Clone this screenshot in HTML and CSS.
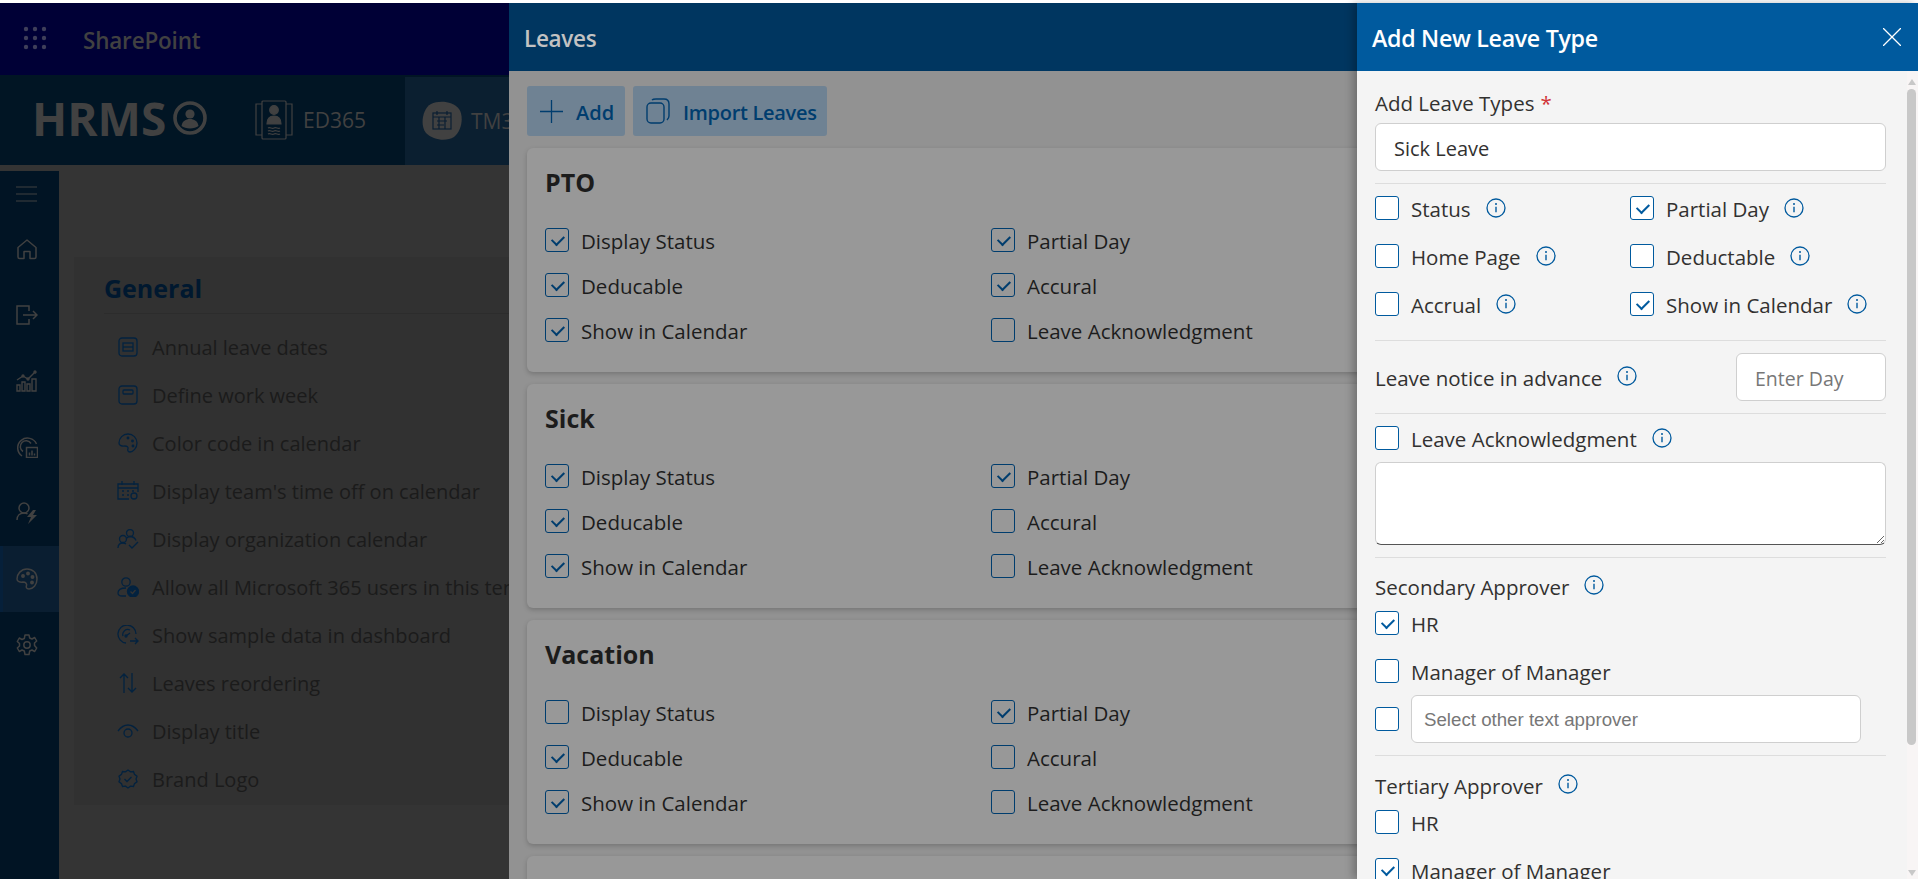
FILE: index.html
```html
<!DOCTYPE html>
<html>
<head>
    <title>HRMS - Leaves</title>
    <link rel="stylesheet" href="styles.css">
</head>
<body>
    <svg class="defs" width="0" height="0">
        <symbol id="info" viewBox="0 0 20 20">
            <circle cx="10" cy="10" r="9" fill="none" stroke="currentColor" stroke-width="1.3"/>
            <path d="M10 8.7v5.6" fill="none" stroke="currentColor" stroke-width="1.4"/>
            <circle cx="10" cy="6" r="1" fill="currentColor"/>
        </symbol>
    </svg>

    <header class="suite-bar">
        <svg class="waffle" width="24" height="24" viewBox="0 0 24 24" fill="#3f3f5a">
            <circle cx="3" cy="3" r="2.2"/><circle cx="12" cy="3" r="2.2"/><circle cx="21" cy="3" r="2.2"/>
            <circle cx="3" cy="12" r="2.2"/><circle cx="12" cy="12" r="2.2"/><circle cx="21" cy="12" r="2.2"/>
            <circle cx="3" cy="21" r="2.2"/><circle cx="12" cy="21" r="2.2"/><circle cx="21" cy="21" r="2.2"/>
        </svg>
        <span class="suite-name">SharePoint</span>
    </header>

    <nav class="app-bar">
        <div class="brand">
            <span>HRMS</span>
            <svg width="34" height="34" viewBox="0 0 34 34">
                <circle cx="17" cy="17" r="15" fill="none" stroke="#414141" stroke-width="3.6"/>
                <circle cx="17" cy="13" r="4.6" fill="#414141"/>
                <path d="M8.5 25c.8-5 4.3-7 8.5-7s7.700 2 8.500 7c-2 1.500-5 2.500-8.500 2.500s-6.500-1-8.500-2.500z" fill="#414141"/>
            </svg>
        </div>
        <div class="app-tab">
            <svg width="38" height="40" viewBox="0 0 38 40" fill="none" stroke="#414141" stroke-width="1.2">
                <rect x="7" y="1" width="24" height="38" rx="1"/>
                <path d="M7 4H1v31h6M31 4h6v31h-6"/>
                <circle cx="19" cy="10" r="4.300" fill="#414141"/>
                <path d="M12 24c0-6 3-8 7-8s7 2 7 8z" fill="#414141"/>
                <path d="M13 28c2-1.500 4 1.500 6 0s4 1.500 6 0M13 31c2-1.500 4 1.500 6 0s4 1.500 6 0M13 34c2-1.500 4 1.500 6 0s4 1.500 6 0"/>
            </svg>
            <span>ED365</span>
        </div>
        <div class="app-tab app-tab-active">
            <svg width="42" height="40" viewBox="0 0 42 40">
                <path d="M10 3c8-4 22-3 28 5 5 7 3 22-5 28-8 5-21 3-28-4C-1 25 1 8 10 3z" fill="#414141"/>
                <g fill="none" stroke="#0b1f33" stroke-width="1.200">
                    <rect x="12" y="12" width="18" height="16"/>
                    <path d="M12 16h18M16 10v4M26 10v4M16 20h10M16 24h7M18 16v12M24 16v12"/>
                </g>
            </svg>
            <span>TM365</span>
        </div>
    </nav>

    <div class="workspace">
        <aside class="rail">
            <div class="rail-item rail-menu">
                <svg width="22" height="16" viewBox="0 0 22 16" stroke="#414141" stroke-width="1.200"><path d="M0 1h21M0 8h21M0 15h21"/></svg>
            </div>
            <div class="rail-item">
                <svg width="22" height="22" viewBox="0 0 22 22" fill="none" stroke="#414141" stroke-width="1.500"><path d="M2 19V9.500L11 2l9 7.500V19q0 1.500-1.500 1.500H14v-7H8v7H3.500Q2 20.500 2 19z" stroke-linejoin="round"/></svg>
            </div>
            <div class="rail-item">
                <svg width="22" height="20" viewBox="0 0 22 20" fill="none" stroke="#414141" stroke-width="1.500"><path d="M13 6V1H1v18h12v-5M7 10h14M17 6l4 4-4 4"/></svg>
            </div>
            <div class="rail-item">
                <svg width="22" height="22" viewBox="0 0 22 22" fill="none" stroke="#414141" stroke-width="1.400"><path d="M1 21v-6h3v6zM6 21v-9h3v9zM11 21v-7h3v7zM16 21V9h4v12zM1 10l6-4 5 3 7-7"/><circle cx="7" cy="6" r="1" fill="#414141"/><circle cx="12" cy="9" r="1" fill="#414141"/><circle cx="19" cy="2" r="1" fill="#414141"/></svg>
            </div>
            <div class="rail-item">
                <svg width="22" height="22" viewBox="0 0 22 22" fill="none" stroke="#414141" stroke-width="1.500"><path d="M6 20A9.800 9.800 0 1 1 20.500 8M7 15.500a5.800 5.800 0 1 1 8-8"/><rect x="10.500" y="11.500" width="11" height="10"/><path d="M13.500 19.500v-3M16 19.500v-5M18.500 19.500v-2"/></svg>
            </div>
            <div class="rail-item">
                <svg width="22" height="22" viewBox="0 0 22 22" fill="none" stroke="#414141" stroke-width="1.500"><circle cx="8" cy="6" r="5"/><path d="M1 18c0-4.500 3-7 7-7 1.500 0 2.500.300 3.500.800"/><path d="M17 8l-6 7h4l-3 7 9-9h-4l3-5z" fill="#414141" stroke="none"/></svg>
            </div>
            <div class="rail-item rail-item-active">
                <svg width="22" height="22" viewBox="0 0 22 22" fill="none" stroke="#414141" stroke-width="1.500"><path d="M11 1c6 0 10 4 10 10s-4 10-8 10c-3 0-3-2-2.500-3.500S10 14 7 14c-3 .500-6-.500-6-3C1 6 5 1 11 1z"/><circle cx="7" cy="8" r="1.200" fill="#414141"/><circle cx="12" cy="5.500" r="1.200" fill="#414141"/><circle cx="16.500" cy="9" r="1.200" fill="#414141"/><circle cx="16" cy="14.500" r="1.200" fill="#414141"/></svg>
            </div>
            <div class="rail-item">
                <svg width="22" height="22" viewBox="0 0 22 22" fill="none" stroke="#414141" stroke-width="1.500"><path d="M9 1h4l.7 3 2.300 1 2.700-1.500 2 3.500-2.200 2v2.400L20.700 14l-2 3.500-2.700-1.500-2.300 1-.7 3.500H9l-.7-3.500-2.300-1-2.700 1.500-2-3.500L3.500 12V9.500L1.300 7.500l2-3.500L6 5.500 8.300 4.500z" stroke-linejoin="round"/><circle cx="11" cy="11" r="3.200"/></svg>
            </div>
        </aside>

        <main class="settings">
            <section class="settings-card">
                <h2>General</h2>
                <ul class="settings-list">
                    <li>
                        <svg width="20" height="20" viewBox="0 0 20 20"><rect x="1" y="1" width="18" height="18" rx="3"/><rect x="5" y="6" width="10" height="8"/><path d="M5 10h10"/></svg>
                        Annual leave dates
                    </li>
                    <li>
                        <svg width="20" height="20" viewBox="0 0 20 20"><rect x="1" y="1" width="18" height="18" rx="3"/><rect x="5" y="5" width="10" height="4" rx="1"/></svg>
                        Define work week
                    </li>
                    <li>
                        <svg width="20" height="20" viewBox="0 0 20 20"><path d="M10 1c5 0 9 4 9 9s-4 9-7 9c-2.500 0-2.500-2-2-3.500s-1-2.500-3-2.500c-3 .500-6-.500-6-3C1 5 5 1 10 1z"/><circle cx="10" cy="5" r=".8"/><circle cx="14.500" cy="8" r=".8"/><circle cx="15" cy="13" r=".8"/></svg>
                        Color code in calendar
                    </li>
                    <li>
                        <svg width="22" height="20" viewBox="0 0 22 20"><path d="M12 18H1V3h20v8M1 7h20M5 0v4M17 0v4M5 10h2M10 10h2M15 10h2M5 14h2M10 14h2"/><circle cx="17" cy="15" r="3"/></svg>
                        Display team's time off on calendar
                    </li>
                    <li>
                        <svg width="22" height="20" viewBox="0 0 22 20"><circle cx="13" cy="4" r="3.500"/><circle cx="6" cy="10" r="3.500"/><path d="M1 19c0-3 2-5 5-5 1 0 2 .300 3 1M10 9c1-1 2-1.500 3-1.500 3 0 5 1.500 6 4M12 16l3 3 6-6"/></svg>
                        Display organization calendar
                    </li>
                    <li>
                        <svg width="22" height="20" viewBox="0 0 22 20"><circle cx="9" cy="5" r="4.200"/><path d="M9 19H5c-2.500 0-4-1-4-3 0-3 3-5 8-5"/><circle cx="16" cy="14.500" r="5.500" fill="currentColor"/><path d="M13.500 14.500l2 2 3-3.500" stroke="#333"/></svg>
                        Allow all Microsoft 365 users in this tenant
                    </li>
                    <li>
                        <svg width="22" height="20" viewBox="0 0 22 20"><path d="M9 18A9 9 0 1 1 19 9M6 11a5 5 0 0 1 7-6M9 11l4-3M13 16h8M18 13l3 3-3 3"/><circle cx="9" cy="11" r="1"/></svg>
                        Show sample data in dashboard
                    </li>
                    <li>
                        <svg width="20" height="20" viewBox="0 0 20 20"><path d="M6 20V1M2 5l4-4 4 4M14 0v19M10 15l4 4 4-4"/></svg>
                        Leaves reordering
                    </li>
                    <li>
                        <svg width="22" height="14" viewBox="0 0 22 14"><path d="M1 7c3-4 6-6 10-6s7 2 10 6"/><circle cx="11" cy="9" r="4"/></svg>
                        Display title
                    </li>
                    <li>
                        <svg width="20" height="20" viewBox="0 0 20 20"><path d="M10 1l2.500 1.800 3-.300 1 2.900 2.500 1.800-1 2.800 1 2.800-2.500 1.800-1 2.900-3-.300L10 19l-2.500-1.800-3 .300-1-2.900L1 12.800l1-2.800-1-2.800 2.500-1.800 1-2.900 3 .300z"/><path d="M6.500 10l2.500 2.500 4.500-4.500"/></svg>
                        Brand Logo
                    </li>
                </ul>
            </section>
        </main>
    </div>

    <!-- first panel, lies over the settings page -->
    <div class="leaves-panel">
        <div class="leaves-head">Leaves</div>
        <div class="leaves-body">
            <div class="toolbar">
                <button class="tool-btn btn-add">
                    <svg width="23" height="23" viewBox="0 0 23 23" stroke="#003d6e" stroke-width="1.300"><path d="M11.500 0v23M0 11.500h23"/></svg>
                    Add
                </button>
                <button class="tool-btn btn-import">
                    <svg width="24" height="26" viewBox="0 0 24 26" fill="none" stroke="#003d6e" stroke-width="1.400"><rect x="1" y="5" width="17" height="20" rx="4"/><path d="M6 2c1-1 2-1 4-1h8c3 0 5 2 5 5v12c0 2-1 3-2 4"/></svg>
                    Import Leaves
                </button>
            </div>

            <section class="leave-card">
                <h3>PTO</h3>
                <div class="leave-grid">
                    <label class="dim-check"><input type="checkbox" checked>Display Status</label>
                    <label class="dim-check"><input type="checkbox" checked>Partial Day</label>
                    <label class="dim-check"><input type="checkbox" checked>Deducable</label>
                    <label class="dim-check"><input type="checkbox" checked>Accural</label>
                    <label class="dim-check"><input type="checkbox" checked>Show in Calendar</label>
                    <label class="dim-check"><input type="checkbox">Leave Acknowledgment</label>
                </div>
            </section>

            <section class="leave-card">
                <h3>Sick</h3>
                <div class="leave-grid">
                    <label class="dim-check"><input type="checkbox" checked>Display Status</label>
                    <label class="dim-check"><input type="checkbox" checked>Partial Day</label>
                    <label class="dim-check"><input type="checkbox" checked>Deducable</label>
                    <label class="dim-check"><input type="checkbox">Accural</label>
                    <label class="dim-check"><input type="checkbox" checked>Show in Calendar</label>
                    <label class="dim-check"><input type="checkbox">Leave Acknowledgment</label>
                </div>
            </section>

            <section class="leave-card">
                <h3>Vacation</h3>
                <div class="leave-grid">
                    <label class="dim-check"><input type="checkbox">Display Status</label>
                    <label class="dim-check"><input type="checkbox" checked>Partial Day</label>
                    <label class="dim-check"><input type="checkbox" checked>Deducable</label>
                    <label class="dim-check"><input type="checkbox">Accural</label>
                    <label class="dim-check"><input type="checkbox" checked>Show in Calendar</label>
                    <label class="dim-check"><input type="checkbox">Leave Acknowledgment</label>
                </div>
            </section>

            <section class="leave-card"></section>
        </div>
    </div>

    <!-- second panel, on top of the first -->
    <div class="side-panel">
        <div class="side-head">
            <span>Add New Leave Type</span>
            <svg width="18" height="18" viewBox="0 0 18 18" stroke="#fff" stroke-width="1.300"><path d="M0 0l18 18M18 0L0 18"/></svg>
        </div>
        <div class="side-body">
            <section class="side-section section-first">
                <div class="field-label">Add Leave Types <span class="required">*</span></div>
                <input class="text-input" type="text" value="Sick Leave">
            </section>

            <section class="side-section">
                <div class="option-grid">
                    <label class="check"><input type="checkbox">Status<svg class="info"><use href="#info"/></svg></label>
                    <label class="check"><input type="checkbox" checked>Partial Day<svg class="info"><use href="#info"/></svg></label>
                    <label class="check"><input type="checkbox">Home Page<svg class="info"><use href="#info"/></svg></label>
                    <label class="check"><input type="checkbox">Deductable<svg class="info"><use href="#info"/></svg></label>
                    <label class="check"><input type="checkbox">Accrual<svg class="info"><use href="#info"/></svg></label>
                    <label class="check"><input type="checkbox" checked>Show in Calendar<svg class="info"><use href="#info"/></svg></label>
                </div>
            </section>

            <section class="side-section notice-row">
                <div class="field-label">Leave notice in advance<svg class="info"><use href="#info"/></svg></div>
                <input class="text-input day-input" type="text" placeholder="Enter Day">
            </section>

            <section class="side-section">
                <label class="check"><input type="checkbox">Leave Acknowledgment<svg class="info"><use href="#info"/></svg></label>
                <textarea class="ack-text"></textarea>
            </section>

            <section class="side-section approver">
                <div class="field-label">Secondary Approver<svg class="info"><use href="#info"/></svg></div>
                <label class="check"><input type="checkbox" checked>HR</label>
                <label class="check"><input type="checkbox">Manager of Manager</label>
                <div class="other-row">
                    <input class="check-box" type="checkbox">
                    <input class="text-input other-input" type="text" placeholder="Select other text approver">
                </div>
            </section>

            <section class="side-section approver approver-last">
                <div class="field-label">Tertiary Approver<svg class="info"><use href="#info"/></svg></div>
                <label class="check"><input type="checkbox">HR</label>
                <label class="check"><input type="checkbox" checked>Manager of Manager</label>
            </section>
        </div>
        <div class="scroll-track">
            <span class="scroll-up"></span>
            <span class="scroll-thumb"></span>
            <span class="scroll-down"></span>
        </div>
    </div>
</body>
</html>
```

FILE: styles.css
```css
:root {
    --blue: #005a9e;
    --blue-dim: #003d6e;
    --text: #323130;
    --line: #dddddd;
    --field-border: #cfcfcf;
}

* {
    box-sizing: border-box;
}

html, body {
    height: 100%;
}

body {
    margin: 0;
    padding-top: 3px;
    overflow: hidden;
    position: relative;
    display: flex;
    flex-direction: column;
    background: #fff;
    font-family: "Open Sans", "Noto Sans", sans-serif;
    font-size: 20px;
    color: var(--text);
}

.defs {
    position: absolute;
}

/* background page */
.suite-bar {
    height: 72px;
    flex: none;
    display: flex;
    align-items: center;
    gap: 36px;
    padding-left: 23px;
    background: #000036;
}

.waffle {
    margin-top: -2px;
}

.suite-name {
    margin-top: 2px;
    font-size: 22.5px;
    font-weight: 600;
    color: #414141;
    letter-spacing: -0.2px;
}

.app-bar {
    height: 90px;
    flex: none;
    display: flex;
    background: #011524;
    color: #414141;
}

.brand {
    width: 255px;
    display: flex;
    align-items: center;
    gap: 7px;
    padding: 0 0 4px 32px;
    font-size: 46px;
    font-weight: 700;
}

.app-tab {
    width: 150px;
    display: flex;
    align-items: center;
    gap: 10px;
    font-size: 21px;
}

.app-tab-active {
    height: 88px;
    margin-top: 2px;
    padding-left: 16px;
    gap: 8px;
    background: #0b1f30;
}

.workspace {
    flex: 1;
    min-height: 0;
    display: flex;
    padding-top: 6px;
    background: #343434;
}

.rail {
    width: 59px;
    flex: none;
    background: #011424;
}

.rail-item {
    height: 66px;
    display: flex;
    align-items: center;
    justify-content: center;
    padding-right: 5px;
}

.rail-menu {
    height: 45px;
}

.rail-item-active {
    background: #0a1e31;
    border-left: 3px solid #06203a;
    padding-right: 8px;
}

.settings {
    flex: 1;
    padding: 86px 0 0 15px;
}

.settings-card {
    width: 900px;
    height: 548px;
    padding: 14px 30px;
    background: #313131;
}

.settings-card h2 {
    margin: 0;
    height: 43px;
    border-bottom: 1px solid #2c2c2c;
    font-size: 25px;
    line-height: 34px;
    font-weight: 700;
    color: #00182f;
}

.settings-list {
    list-style: none;
    margin: 9px 0 0;
    padding: 0 0 0 13px;
}

.settings-list li {
    height: 48px;
    display: flex;
    align-items: center;
    white-space: nowrap;
    color: #1b1b1b;
}

.settings-list svg {
    width: 22px;
    margin-right: 13px;
    flex: none;
    fill: none;
    stroke: #03223f;
    stroke-width: 1.300;
    color: #03223f;
}

/* leaves panel */
.leaves-panel {
    position: absolute;
    top: 3px;
    left: 509px;
    right: 0;
    bottom: 0;
    overflow: hidden;
    background: #929292;
}

.leaves-head {
    height: 68px;
    display: flex;
    align-items: center;
    padding: 3px 0 0 15px;
    background: #003660;
    color: #c2c2c2;
    font-size: 22.5px;
    font-weight: 600;
    letter-spacing: -0.3px;
}

.leaves-body {
    padding: 15px 0 0 18px;
    display: flex;
    flex-direction: column;
    gap: 12px;
}

.toolbar {
    display: flex;
    gap: 8px;
}

.tool-btn {
    height: 50px;
    display: flex;
    align-items: center;
    gap: 13px;
    padding: 3px 0 0 13px;
    border: none;
    border-radius: 3px;
    background: #6f8293;
    color: var(--blue-dim);
    font: inherit;
    font-weight: 600;
}

.tool-btn svg {
    margin-top: -3px;
}

.btn-add {
    width: 98px;
}

.btn-import {
    width: 194px;
    letter-spacing: -0.3px;
}

.leave-card {
    flex: none;
    height: 224px;
    padding: 16px 18px;
    border-radius: 6px;
    background: #989898;
    box-shadow: 0 2px 5px rgba(0, 0, 0, 0.2);
}

.leave-card h3 {
    margin: 0 0 28px;
    font-size: 25px;
    line-height: 36px;
    font-weight: 700;
    color: #1c1c1c;
}

.leave-grid {
    display: grid;
    grid-template-columns: 446px 1fr;
    row-gap: 21px;
}

.dim-check, .check {
    display: flex;
    align-items: center;
    height: 24px;
    padding-top: 2px;
    white-space: nowrap;
    font-size: 20.5px;
    font-weight: 500;
}

.dim-check {
    color: #1c1c1c;
}

input[type="checkbox"] {
    appearance: none;
    width: 24px;
    height: 24px;
    flex: none;
    margin: -2px 12px 0 0;
    border: 1.500px solid var(--blue);
    border-radius: 3px;
    background: #fff;
    position: relative;
}

input[type="checkbox"]:checked::after {
    content: "";
    position: absolute;
    left: 7.5px;
    top: 3.5px;
    width: 5.5px;
    height: 10px;
    border: solid var(--blue);
    border-width: 0 2.500px 2.500px 0;
    transform: rotate(45deg);
}

.dim-check input[type="checkbox"] {
    border-color: var(--blue-dim);
    background: transparent;
}

.dim-check input[type="checkbox"]:checked::after {
    border-color: var(--blue-dim);
    border-width: 0 2px 2px 0;
}

/* add leave type panel */
.side-panel {
    position: absolute;
    top: 3px;
    left: 1357px;
    right: 0;
    bottom: 0;
    overflow: hidden;
    background: #f4f4f4;
    box-shadow: -4px 0 8px rgba(0, 0, 0, 0.25);
}

.side-head {
    height: 68px;
    display: flex;
    align-items: center;
    justify-content: space-between;
    padding: 0 17px 0 15px;
    background: var(--blue);
    color: #fff;
    font-size: 23.2px;
    font-weight: 600;
    letter-spacing: -0.3px;
}

.side-head span {
    margin-top: 2px;
}

.side-body {
    padding: 0 32px 0 18px;
}

.side-section {
    padding: 12px 0;
    border-bottom: 1px solid var(--line);
}

.section-first {
    padding-top: 20px;
}

.field-label {
    display: flex;
    align-items: center;
    height: 22px;
    padding-top: 1px;
    white-space: nowrap;
    font-size: 20.5px;
    font-weight: 500;
}

.section-first .field-label {
    margin-bottom: 10px;
}

.required {
    color: #d13438;
    margin-left: 6px;
}

.info {
    width: 20px;
    height: 20px;
    flex: none;
    margin-left: 15px;
    margin-top: -3px;
    color: var(--blue);
}

.text-input {
    height: 48px;
    width: 100%;
    padding: 2px 18px 0;
    border: 1px solid var(--field-border);
    border-radius: 6px;
    background: #fff;
    font: inherit;
    color: var(--text);
    outline: none;
}

.text-input::placeholder {
    color: #777;
}

.option-grid {
    display: grid;
    grid-template-columns: 255px 1fr;
    row-gap: 24px;
    padding-bottom: 12px;
}

.notice-row {
    display: flex;
    align-items: center;
    justify-content: space-between;
}

.day-input {
    width: 150px;
    font-size: 19.5px;
}

.ack-text {
    display: block;
    width: 100%;
    height: 83px;
    margin-top: 12px;
    border: 1px solid var(--field-border);
    border-bottom-color: #555;
    border-radius: 6px;
    background: #fff;
    outline: none;
}

.approver {
    padding-top: 17px;
}

.approver > .field-label {
    margin-bottom: 14px;
}

.approver > .check {
    margin-bottom: 24px;
}

.other-row {
    display: flex;
    align-items: center;
    margin-top: -12px;
}

.other-row input[type="checkbox"] {
    margin-top: 0;
}

.other-input {
    width: 450px;
    padding: 2px 12px 0;
    font-family: "Liberation Sans", Arial, sans-serif;
    font-size: 18.7px;
}

.approver-last {
    border-bottom: none;
    padding-top: 18px;
}

.scroll-track {
    position: absolute;
    top: 68px;
    right: 0;
    bottom: 0;
    width: 11px;
    background: #f8f5f5;
}

.scroll-thumb {
    position: absolute;
    top: 18px;
    height: 656px;
    left: 0;
    right: 2px;
    border-radius: 5px;
    background: #c8c8c8;
}

.scroll-up, .scroll-down {
    position: absolute;
    left: 1px;
    border-left: 4px solid transparent;
    border-right: 4px solid transparent;
}

.scroll-up {
    top: 8px;
    border-bottom: 6px solid #c8c8c8;
}

.scroll-down {
    bottom: 3px;
    border-top: 6px solid #c8c8c8;
}
```
